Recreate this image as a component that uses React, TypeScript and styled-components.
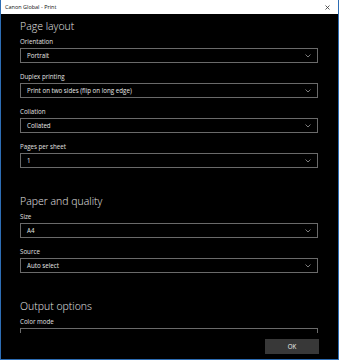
import React from 'react';
import styled, { createGlobalStyle } from 'styled-components';

const GlobalStyle = createGlobalStyle`
  html, body {
    margin: 0;
    padding: 0;
    background: #000;
  }
  body {
    font-family: "Open Sans", "Noto Sans", sans-serif;
  }
`;

const Window = styled.div`
  width: 339px;
  height: 360px;
  box-sizing: border-box;
  display: flex;
  flex-direction: column;
  background: #000;
  border: 1px solid #2d6db4;
  border-top: none;
  overflow: hidden;
`;

const TitleBar = styled.div`
  height: 14px;
  flex: none;
  display: flex;
  align-items: center;
  justify-content: space-between;
  padding: 0 6px 0 4px;
  background: #fff;
  color: #111;
  font-size: 5.5px;
`;

const CloseButton = styled.div`
  display: flex;
  align-items: center;
  justify-content: center;
  width: 10px;
  height: 10px;
`;

const Content = styled.div`
  flex: 1;
  overflow: hidden;
  padding: 5px 20px 0 19px;
`;

const Section = styled.section`
  display: flex;
  flex-direction: column;
  gap: 9px;
  margin-bottom: 26px;
`;

const Heading = styled.h2`
  margin: 0 0 -5px;
  font-size: 10.5px;
  line-height: 14px;
  font-weight: 300;
  color: #e6e6e6;
`;

const Field = styled.div`
  display: flex;
  flex-direction: column;
`;

const Label = styled.div`
  font-size: 6.2px;
  line-height: 10px;
  color: #e0e0e0;
  margin-bottom: 1px;
`;

const SelectBox = styled.div`
  height: 15px;
  box-sizing: border-box;
  display: flex;
  align-items: center;
  justify-content: space-between;
  padding: 0 6px 0 6px;
  border: 1px solid #6a6a6a;
  background: #000;
  color: #e8e8e8;
  font-size: 6.2px;
`;

const Footer = styled.div`
  height: 26px;
  flex: none;
  display: flex;
  justify-content: flex-end;
  align-items: flex-start;
  padding: 6px 19px 0 0;
  box-sizing: border-box;
  background: #000;
`;

const OkButton = styled.button`
  width: 54px;
  height: 15px;
  border: none;
  padding: 0;
  background: #383838;
  color: #f0f0f0;
  font-family: inherit;
  font-size: 6.2px;
`;

const Chevron = () => (
  <svg width="6" height="4" viewBox="0 0 6 4">
    <polyline points="0.5,0.5 3,3 5.5,0.5" fill="none" stroke="#9a9a9a" strokeWidth="0.8" />
  </svg>
);

const Select = ({ value }: { value: string }) => (
  <SelectBox>
    <span>{value}</span>
    <Chevron />
  </SelectBox>
);

const sections = [
  {
    title: 'Page layout',
    fields: [
      ['Orientation', 'Portrait'],
      ['Duplex printing', 'Print on two sides (flip on long edge)'],
      ['Collation', 'Collated'],
      ['Pages per sheet', '1'],
    ],
  },
  {
    title: 'Paper and quality',
    fields: [
      ['Size', 'A4'],
      ['Source', 'Auto select'],
    ],
  },
  {
    title: 'Output options',
    // value lies below the fold, hidden behind the footer
    fields: [['Color mode', '']],
  },
];

export default function App() {
  return (
    <>
      <GlobalStyle />
      <Window>
        <TitleBar>
          <span>Canon Global - Print</span>
          <CloseButton>
            <svg width="5" height="5" viewBox="0 0 5 5">
              <path d="M0.5 0.5 L4.5 4.5 M4.5 0.5 L0.5 4.5" stroke="#333" strokeWidth="0.8" />
            </svg>
          </CloseButton>
        </TitleBar>
        <Content>
          {sections.map((s) => (
            <Section key={s.title}>
              <Heading>{s.title}</Heading>
              {s.fields.map(([label, value]) => (
                <Field key={label}>
                  <Label>{label}</Label>
                  <Select value={value} />
                </Field>
              ))}
            </Section>
          ))}
        </Content>
        <Footer>
          <OkButton>OK</OkButton>
        </Footer>
      </Window>
    </>
  );
}
